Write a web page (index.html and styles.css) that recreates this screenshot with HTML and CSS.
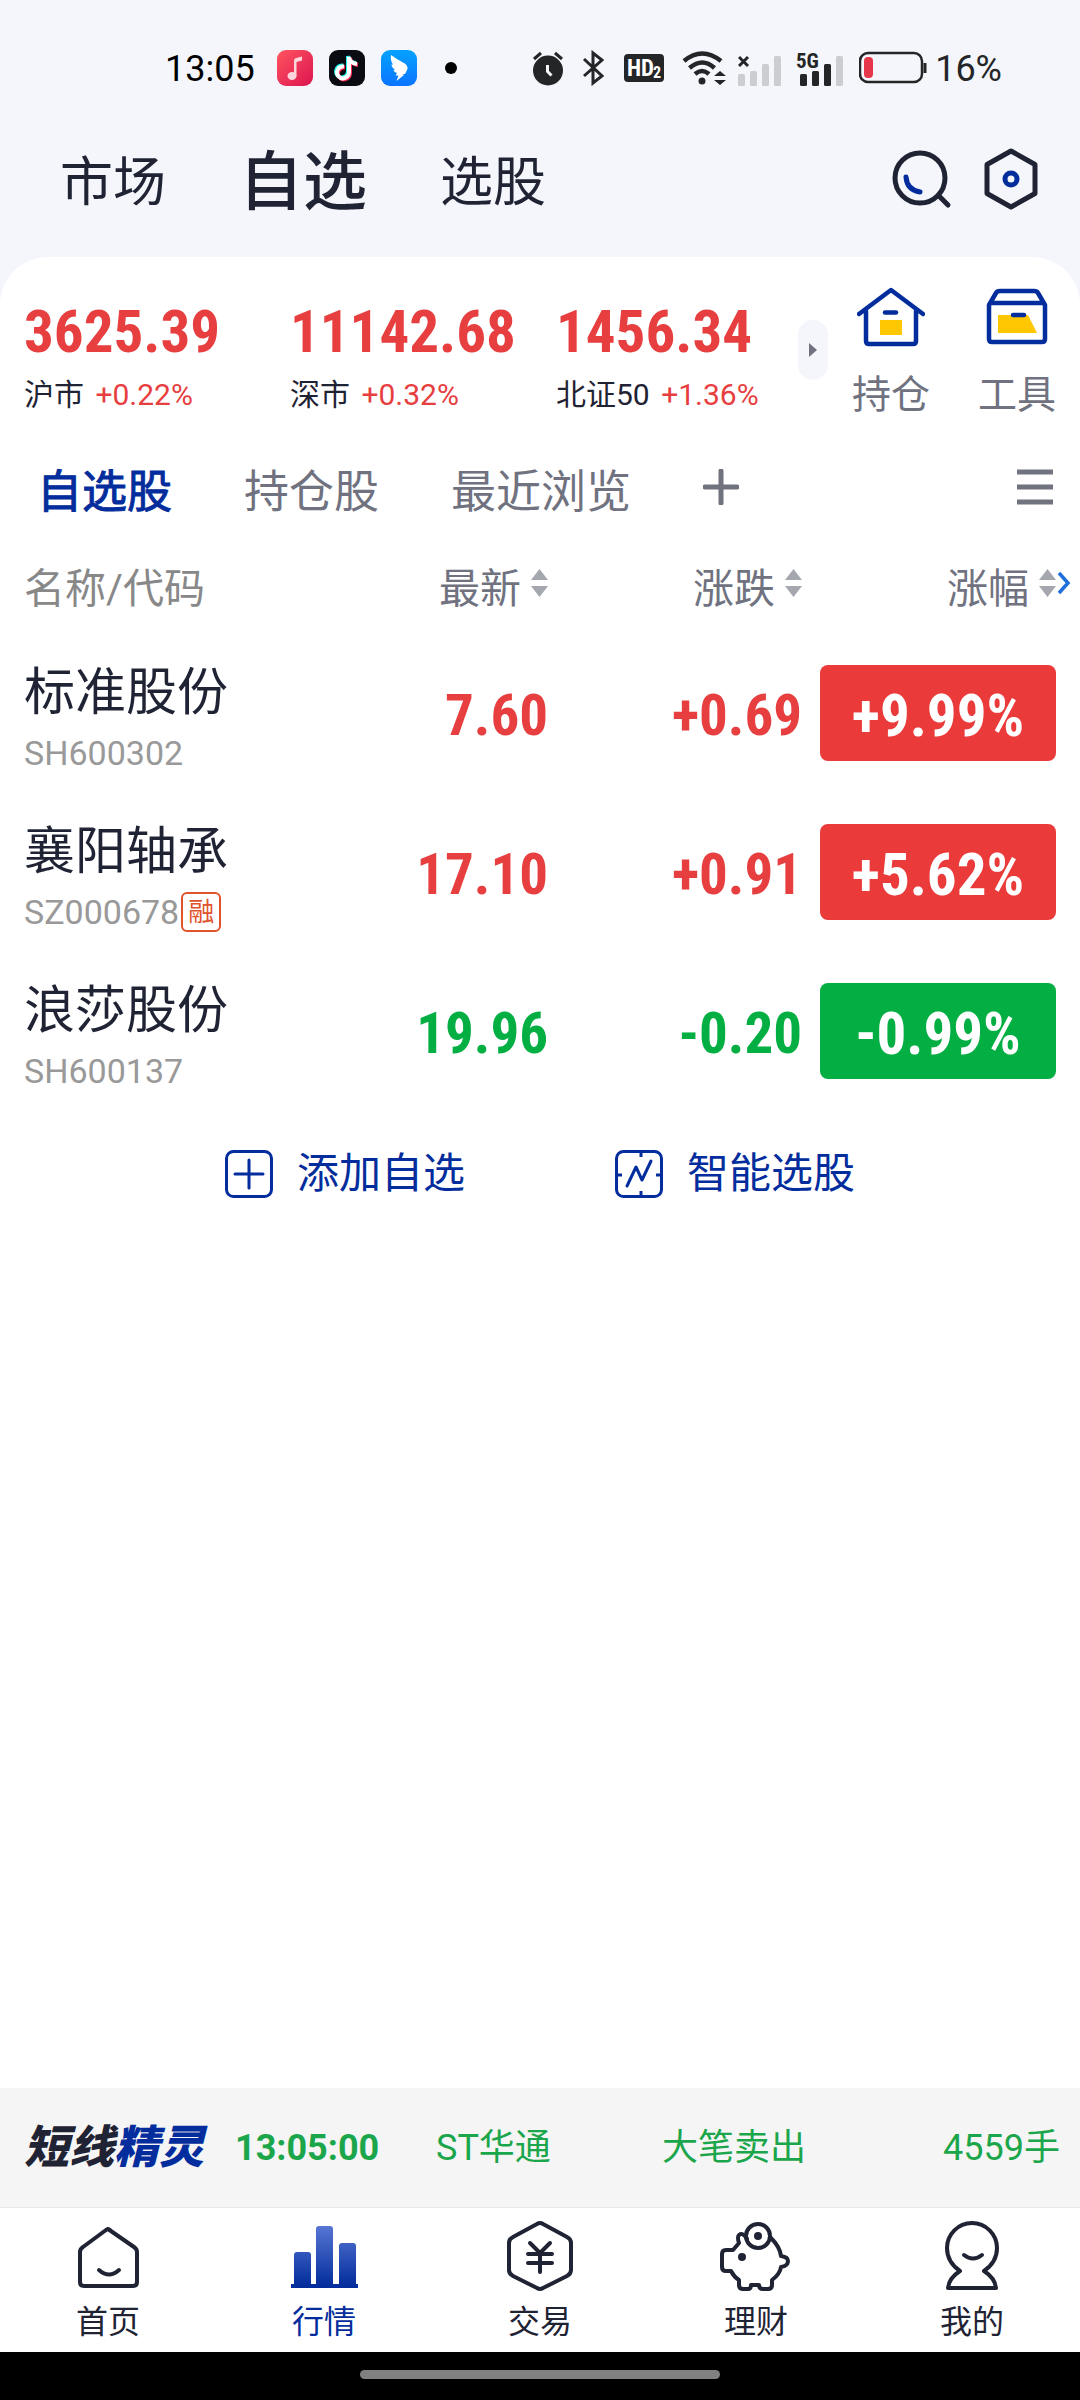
FILE: index.html
```html
<!DOCTYPE html>
<html lang="zh-CN">
<head>
<meta charset="UTF-8">
<title>自选</title>
<meta name="viewport" content="width=device-width,initial-scale=1">
<link rel="stylesheet" href="styles.css">
</head>
<body>

<div class="status">
  <span class="clock">13:05</span>
  <div class="apps">
    <svg width="36" height="36" viewBox="0 0 36 36"><defs><linearGradient id="music" x1="0" y1="0" x2="1" y2="1"><stop offset="0" stop-color="#ff5560"/><stop offset="1" stop-color="#dc1450"/></linearGradient></defs><rect width="36" height="36" rx="9" fill="url(#music)"/><ellipse cx="15" cy="26" rx="4.5" ry="4" fill="#ffd5dc"/><path d="M17 26V10.500Q17 8.500 19 8L25 6.500V10.500L19.500 12V26z" fill="#ffd5dc"/></svg>
    <svg width="36" height="36" viewBox="0 0 36 36" fill="none" stroke-width="4"><rect width="36" height="36" rx="9" fill="#0b0b14"/><path d="M15 16.500a6 6 0 1 0 5 6V7c.5 4 3.500 6.500 8 7" stroke="#25f4ee" transform="translate(-1 -1)"/><path d="M15 16.500a6 6 0 1 0 5 6V7c.5 4 3.500 6.500 8 7" stroke="#fe2c55" transform="translate(1 1)"/><path d="M15 16.500a6 6 0 1 0 5 6V7c.5 4 3.500 6.500 8 7" stroke="#fff"/></svg>
    <svg width="36" height="36" viewBox="0 0 36 36"><defs><linearGradient id="wing" x1="0" y1="0" x2="0" y2="1"><stop offset="0" stop-color="#05a2ff"/><stop offset="1" stop-color="#0a74ff"/></linearGradient></defs><rect width="36" height="36" rx="9" fill="url(#wing)"/><path d="M10 5Q17 10 22 12.500 27 15 26.500 19L24 24H21.500L23 25 15.500 31 17.500 25.500H14.500L16 23Q13 22.500 12.500 20L14 19.500Q10.500 17.500 10.500 14.500L12 14.500Q9 10 10 5z" fill="#fff"/></svg>
    <svg class="dot" width="12" height="12" viewBox="0 0 12 12"><circle cx="6" cy="6" r="6"/></svg>
  </div>
  <div class="signals">
    <svg width="32" height="36" viewBox="0 0 32 36" fill="#232527"><circle cx="16" cy="20.500" r="15"/><path d="M2 9l7-6M30 9l-7-6" stroke="#232527" stroke-width="3"/><path d="M15.500 15v6.500l4 4" fill="none" stroke="#f4f6fb" stroke-width="3"/></svg>
    <svg class="bt" width="22" height="36" viewBox="0 0 22 36" fill="none" stroke="#232527" stroke-width="3"><path d="M2 9l18 17-9 7V3l9 7L2 26"/></svg>
    <svg class="hd" width="40" height="36" viewBox="0 0 40 36"><rect y="4" width="40" height="28" rx="4" fill="#232527"/><text x="3" y="26" font-family="Roboto Condensed" font-size="23" font-weight="700" fill="#fff">HD</text><text x="29" y="28" font-family="Roboto Condensed" font-size="16" font-weight="700" fill="#fff">2</text></svg>
    <svg class="wifi" width="44" height="36" viewBox="0 0 44 36" fill="none" stroke="#232527" stroke-width="4.500"><path d="M2 11q18-15 37 0M7.500 18q13-11 25 0M13 24q7-6 14 0"/><circle cx="20" cy="31" r="3.500" fill="#232527" stroke="none"/><path d="M38 21l6 5H32zM38 35l6-5H32z" fill="#232527" stroke="none"/></svg>
    <svg width="44" height="36" viewBox="0 0 44 36" fill="#cbcdd1"><rect y="24" width="7" height="12" rx="1.500"/><rect x="12" y="21" width="7" height="15" rx="1.500"/><rect x="24" y="14" width="7" height="22" rx="1.500"/><rect x="36" y="6" width="7" height="30" rx="1.500"/><path d="M1 7l9 9M10 7l-9 9" stroke="#232527" stroke-width="3"/></svg>
    <svg class="fiveg" width="48" height="36" viewBox="0 0 48 36" fill="#232527"><text x="0" y="18" font-family="Roboto Condensed" font-size="21" font-weight="700">5G</text><rect x="4" y="24" width="7" height="12" rx="1.500"/><rect x="16" y="21" width="7" height="15" rx="1.500"/><rect x="28" y="14" width="7" height="22" rx="1.500"/><rect x="40" y="6" width="7" height="30" rx="1.500" fill="#cbcdd1"/></svg>
    <svg class="battery" width="68" height="36" viewBox="0 0 68 36"><rect x="1" y="3" width="62" height="29" rx="8" fill="none" stroke="#232527" stroke-width="2.500"/><rect x="5" y="7" width="9" height="21" rx="4" fill="#e5364a"/><path d="M66 13v10" stroke="#232527" stroke-width="3"/></svg>
    <span class="percent">16%</span>
  </div>
</div>

<header class="top">
  <nav class="sections">
    <a href="#">市场</a>
    <a href="#" class="on">自选</a>
    <a href="#">选股</a>
  </nav>
  <button aria-label="搜索"><svg width="60" height="62" viewBox="0 0 60 62" fill="none" stroke="#1f2334" stroke-width="5"><circle cx="28" cy="30" r="25"/><path d="M47 48l9 9" stroke-linecap="round"/><path d="M14 29q1 13 14 15" stroke="#032d9c" stroke-linecap="round"/></svg></button>
  <button aria-label="设置"><svg width="56" height="62" viewBox="0 0 56 62" fill="none" stroke="#1f2334" stroke-width="5"><path d="M27 3l24 13.500v29L27 59 3 45.500v-29z" stroke-linejoin="round"/><circle cx="27" cy="31" r="6" stroke="#032d9c"/></svg></button>
</header>

<main>
  <section class="indices">
    <div class="index"><strong>3625.39</strong><p>沪市 <span>+0.22%</span></p></div>
    <div class="index"><strong>11142.68</strong><p>深市 <span>+0.32%</span></p></div>
    <div class="index"><strong>1456.34</strong><p>北证50 <span>+1.36%</span></p></div>
    <button class="more" aria-label="更多指数"><svg width="8" height="14" viewBox="0 0 8 14"><path d="M0 0l8 7-8 7z" fill="#70727f"/></svg></button>
    <a href="#" class="shortcut">
      <svg width="68" height="60" viewBox="0 0 68 60" fill="none" stroke="#032d9c" stroke-width="4.500" stroke-linecap="round" stroke-linejoin="round"><path d="M2 27L34 3l32 24M9 24v30q0 3 3 3h44q3 0 3-3V24"/><path d="M23 33h22v15H23z" fill="#ffc602" stroke="none"/><path d="M28 25.500h11"/></svg>
      持仓
    </a>
    <a href="#" class="shortcut">
      <svg width="62" height="60" viewBox="0 0 62 60" fill="none" stroke="#032d9c" stroke-width="4.500" stroke-linejoin="round"><path d="M3 18L10 6q1-2 4-2h34q3 0 4 2l7 12v34q0 3-3 3H6q-3 0-3-3zM3 16h56"/><path d="M12 28h30l9 18H12z" fill="#ffc602" stroke="none"/><path d="M27 28h11" stroke-linecap="round"/></svg>
      工具
    </a>
  </section>

  <nav class="groups">
    <a href="#" class="on">自选股</a>
    <a href="#">持仓股</a>
    <a href="#">最近浏览</a>
    <button aria-label="新建分组"><svg width="36" height="36" viewBox="0 0 36 36" stroke="#70727f" stroke-width="5" stroke-linecap="round"><path d="M18 2v32M2 18h32"/></svg></button>
    <button class="menu" aria-label="分组管理"><svg width="36" height="36" viewBox="0 0 36 36" stroke="#70727f" stroke-width="5"><path d="M0 3h36M0 18h36M0 33h36"/></svg></button>
  </nav>

  <div class="quotes">
  <table>
    <thead>
      <tr>
        <th class="name">名称/代码</th>
        <th><button>最新<svg width="17" height="28" viewBox="0 0 17 28"><path d="M8.500 0L17 11H0zM8.500 28L17 17H0z"/></svg></button></th>
        <th><button>涨跌<svg width="17" height="28" viewBox="0 0 17 28"><path d="M8.500 0L17 11H0zM8.500 28L17 17H0z"/></svg></button></th>
        <th><button>涨幅<svg width="17" height="28" viewBox="0 0 17 28"><path d="M8.500 0L17 11H0zM8.500 28L17 17H0z"/></svg></button></th>
      </tr>
    </thead>
    <tbody>
      <tr class="up">
        <td class="name">标准股份<small>SH600302</small></td>
        <td>7.60</td>
        <td>+0.69</td>
        <td><span class="rate">+9.99%</span></td>
      </tr>
      <tr class="up">
        <td class="name">襄阳轴承<small>SZ000678<i class="tag">融</i></small></td>
        <td>17.10</td>
        <td>+0.91</td>
        <td><span class="rate">+5.62%</span></td>
      </tr>
      <tr class="down">
        <td class="name">浪莎股份<small>SH600137</small></td>
        <td>19.96</td>
        <td>-0.20</td>
        <td><span class="rate">-0.99%</span></td>
      </tr>
    </tbody>
  </table>
  <svg class="scroll-hint" width="14" height="24" viewBox="0 0 14 24" fill="none" stroke="#1e6fdc" stroke-width="3.500"><path d="M2 2l9 10-9 10"/></svg>
  </div>

  <div class="actions">
    <button><svg width="48" height="48" viewBox="0 0 48 48" fill="none" stroke="#032d9c" stroke-width="3"><rect x="1.500" y="1.500" width="45" height="45" rx="7"/><path d="M24 10v28M10 24h28" stroke-linecap="round"/></svg>添加自选</button>
    <button><svg width="48" height="48" viewBox="0 0 48 48" fill="none" stroke="#032d9c" stroke-width="3"><rect x="1.500" y="1.500" width="45" height="45" rx="7"/><path d="M26 2v5M26 41v5M2 25h5M41 25h5"/><path d="M12 36l9-19 6 13 9-19" stroke-linecap="round" stroke-linejoin="round"/></svg>智能选股</button>
  </div>
</main>

<section class="ticker">
  <b>短线<em>精灵</em></b>
  <time>13:05:00</time>
  <span>ST华通</span>
  <span>大笔卖出</span>
  <span class="volume">4559手</span>
</section>

<nav class="tabbar">
  <a href="#"><svg width="72" height="72" viewBox="0 0 72 72"><path d="M36 9L62 27q3 2 3 5v30q0 4-4 4H12q-4 0-4-4V32q0-3 3-5L34 10q2-2 4 0z"/><path d="M27 50q10 9 20 0"/></svg>首页</a>
  <a href="#" class="on"><svg width="72" height="72" viewBox="0 0 72 72"><defs><linearGradient id="bars" gradientUnits="userSpaceOnUse" x1="0" y1="5" x2="0" y2="66"><stop offset="0" stop-color="#5877d4"/><stop offset="1" stop-color="#032d9c"/></linearGradient></defs><path d="M6 65V35q0-3 3-3h11q3 0 3 3v30zM28 65V9q0-3 3-3h11q3 0 3 3v56zM51 65V26q0-3 3-3h11q3 0 3 3v39zM3 64h67v4H3z" fill="url(#bars)" stroke="none"/></svg>行情</a>
  <a href="#"><svg width="72" height="72" viewBox="0 0 72 72"><path d="M33 4q3-2 6 0l24 13q4 2 4 6v27q0 4-4 6L39 68q-3 2-6 0L9 56q-4-2-4-6V23q0-4 4-6z"/><path d="M26 23l10 10 10-10M24 34h24M24 43h24M36 34v18"/></svg>交易</a>
  <a href="#"><svg width="72" height="72" viewBox="0 0 72 72"><path d="M27 19q-4-7-8-4-2 2 0 8l-6 7H6q-4 0-4 4v13q0 4 4 4h5q3 6 8 9v5q0 4 4 4h5q3 0 3-4h8q0 4 4 4h5q4 0 4-4v-5q8-6 9-13 7-1 7-6 0-4-7-5-1-9-10-18"/><circle cx="38" cy="16" r="12"/><circle cx="38" cy="16" r="2"/><circle cx="22" cy="37" r="2"/></svg>理财</a>
  <a href="#"><svg width="72" height="72" viewBox="0 0 72 72"><path d="M24 51q-13-9-13-23a25 25 0 0 1 50 0q0 14-13 23 11 7 12 17H12q1-10 12-17z"/><path d="M28 35q9 7 18 0"/></svg>我的</a>
</nav>
<div class="home-bar"></div>

</body>
</html>
```
FILE: styles.css
```css
:root{
  --bg:#f4f6fb;
  --ink:#1f2334;
  --grey:#70727f;
  --blue:#032d9c;
  --red:#e73f3f;
  --green:#03ae42;
}
*{margin:0;padding:0;box-sizing:border-box}
body{min-height:100vh;display:flex;flex-direction:column;background:var(--bg);color:var(--ink);font-family:Roboto,"Noto Sans CJK SC",sans-serif}
a{color:inherit;text-decoration:none}
button{border:none;background:none;color:inherit;font:inherit;cursor:pointer}
svg{display:block;flex:none}

.status{display:flex;align-items:center;padding:49px 78px 15px 165px;font-size:36px;line-height:36px}
.clock,.percent{padding-top:2px}
.clock{color:#000}
.apps{display:flex;align-items:center;gap:16px;margin-left:22px}
.dot{margin-left:12px}
.signals{display:flex;align-items:center;margin-left:auto;color:#232527}
.bt{margin-left:18px}
.hd{margin-left:20px}
.wifi{margin-left:18px}
.wifi + svg{margin-left:12px}
.fiveg{margin-left:14px}
.battery{margin-left:15px}
.percent{margin-left:8px}

.top{display:flex;align-items:center;gap:32px;padding:41px 40px 42px 60px}
.sections{display:flex;align-items:center;gap:73px;margin-right:auto;padding-top:8px;font-size:53px;line-height:64px}
.sections .on{font-size:64px;font-weight:500}

main{flex:1;background:#fff;border-radius:48px 48px 0 0;padding-top:28px}
.indices{display:flex;align-items:flex-start;padding:0 24px}
.index{flex:1;padding-top:16px}
.index strong{display:block;color:var(--red);font-family:"Roboto Condensed",Roboto,sans-serif;font-size:59px;line-height:62px}
.index p{margin-top:12px;font-size:30px;line-height:40px;white-space:nowrap}
.index span{color:var(--red);margin-left:4px}
.more{display:flex;align-items:center;justify-content:center;width:30px;height:60px;margin:35px 24px 0 -24px;border-radius:15px;background:var(--bg)}
.shortcut{display:flex;flex-direction:column;align-items:center;gap:28px;padding-top:2px;color:var(--grey);font-size:39px;line-height:40px}
.shortcut + .shortcut{margin-left:48px}

.groups{display:flex;align-items:center;gap:72px;padding:36px 27px 41px 37px;color:var(--grey);font-size:45px;line-height:60px}
.groups a{padding-top:12px}
.groups .on{color:var(--blue);-webkit-text-stroke:1px}
.menu{margin-left:auto}

.quotes{position:relative;padding:0 24px}
table{width:100%;table-layout:fixed;border-collapse:collapse}
th{width:254px;height:70px;vertical-align:top;text-align:right;color:var(--grey);font-size:41px;font-weight:400;line-height:50px}
th.name{width:auto;color:#888;text-align:left}
th button{display:inline-flex;align-items:center;gap:10px}
th svg{margin-bottom:12px;fill:#a5a7af}
td{height:159px;padding-top:31px;vertical-align:top;text-align:right;font-family:"Roboto Condensed",Roboto,sans-serif;font-size:57px;font-weight:700;line-height:102px}
td.name{padding-top:29px;text-align:left;font-family:inherit;font-size:51px;font-weight:400;line-height:60px}
small{display:flex;align-items:center;margin-top:10px;color:#999;font-size:34px;line-height:40px}
.tag{margin-left:2px;padding:0 5px;border:2px solid #e0532d;border-radius:6px;color:#e0532d;font-size:26px;font-style:normal;line-height:36px}
.up{color:var(--red)}
.down{color:var(--green)}
tbody .name{color:var(--ink)}
.rate{display:block;margin-left:18px;padding-top:6px;border-radius:8px;background:var(--green);color:#fff;font-size:59px;line-height:90px;text-align:center}
.up .rate{background:#eb3a3a}
.scroll-hint{position:absolute;top:7px;right:9px}

.actions{display:flex;justify-content:center;gap:150px;padding-top:39px;color:var(--blue);font-size:42px;line-height:48px}
.actions button{display:flex;align-items:center;gap:24px}

.ticker{display:grid;grid-template-columns:211px 201px 226px 1fr auto;align-items:center;padding:32px 20px 31px 24px;background:#f5f5f5;border-bottom:1px solid #e8e8e8;color:#1ba64b;font-size:36px;line-height:56px}
.ticker b{font-size:45px;font-weight:900;font-style:italic;color:var(--ink)}
.ticker em{color:var(--blue)}
.ticker time{font-weight:700}
.volume{grid-column:5}

.tabbar{display:flex;background:#fff}
.tabbar a{flex:1;display:flex;flex-direction:column;align-items:center;gap:10px;padding:12px 0 10px;font-size:32px;line-height:40px}
.tabbar svg{fill:none;stroke:var(--ink);stroke-width:4;stroke-linecap:round;stroke-linejoin:round}
.tabbar .on{color:var(--blue)}
.home-bar{display:flex;justify-content:center;padding:18px 0 21px;background:#000}
.home-bar::before{content:"";width:360px;max-width:50%;height:9px;border-radius:5px;background:#808080}
```
